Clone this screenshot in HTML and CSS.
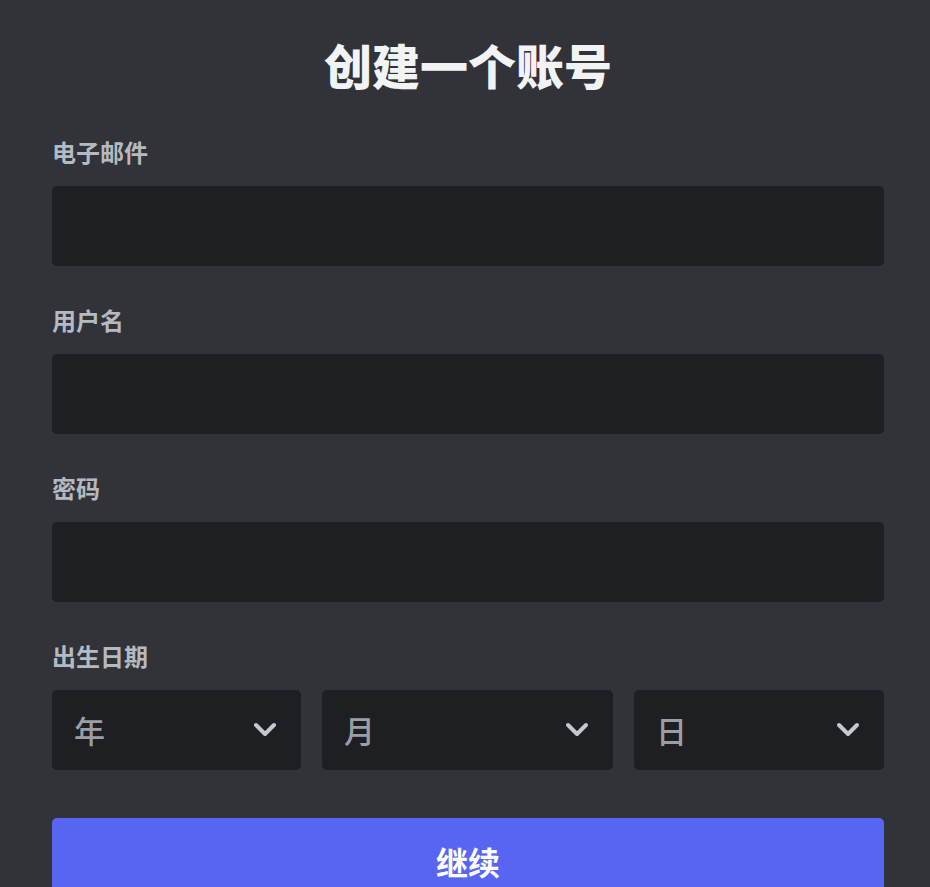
FILE: index.html
```html
<!DOCTYPE html>
<html lang="zh-CN">
<head>
<meta charset="utf-8">
<title>创建一个账号</title>
<link rel="stylesheet" href="styles.css">
</head>
<body>
<main class="form">
  <h1 class="title">创建一个账号</h1>
  <div class="field">
    <label class="label">电子邮件</label>
    <input class="input" type="email">
  </div>
  <div class="field">
    <label class="label">用户名</label>
    <input class="input" type="text">
  </div>
  <div class="field">
    <label class="label">密码</label>
    <input class="input" type="password">
  </div>
  <div class="field">
    <label class="label">出生日期</label>
    <div class="dob">
      <div class="select"><span class="select-text">年</span>
        <svg class="chev" viewBox="0 0 24 16" width="24" height="16"><path d="M3 3 L12 12 L21 3" fill="none" stroke="currentColor" stroke-width="4" stroke-linecap="round" stroke-linejoin="round"/></svg>
      </div>
      <div class="select"><span class="select-text">月</span>
        <svg class="chev" viewBox="0 0 24 16" width="24" height="16"><path d="M3 3 L12 12 L21 3" fill="none" stroke="currentColor" stroke-width="4" stroke-linecap="round" stroke-linejoin="round"/></svg>
      </div>
      <div class="select"><span class="select-text">日</span>
        <svg class="chev" viewBox="0 0 24 16" width="24" height="16"><path d="M3 3 L12 12 L21 3" fill="none" stroke="currentColor" stroke-width="4" stroke-linecap="round" stroke-linejoin="round"/></svg>
      </div>
    </div>
  </div>
  <button class="submit" type="button">继续</button>
</main>
</body>
</html>
```
FILE: styles.css
```css
html, body {
  margin: 0;
  padding: 0;
  height: 100%;
  overflow: hidden;
  background: #313338;
}
body {
  font-family: "Noto Sans CJK SC", "Noto Sans", sans-serif;
}
.form {
  padding: 35px 46px 0 52px;
  display: flex;
  flex-direction: column;
}
.title {
  margin: 0 0 44px;
  font-size: 48px;
  line-height: 58px;
  font-weight: 900;
  color: #f2f3f5;
  text-align: center;
}
.field {
  display: flex;
  flex-direction: column;
  margin-bottom: 39px;
}
.field:last-of-type {
  margin-bottom: 48px;
}
.label {
  font-size: 24px;
  line-height: 30px;
  font-weight: 700;
  color: #b5bac1;
  margin-bottom: 19px;
}
.input {
  box-sizing: border-box;
  height: 80px;
  margin: 0;
  border: none;
  outline: none;
  border-radius: 5px;
  background: #1e1f22;
  color: #dbdee1;
  font-size: 24px;
  padding: 0 20px;
}
.dob {
  display: grid;
  grid-template-columns: 249fr 291fr 250fr;
  column-gap: 21px;
}
.select {
  box-sizing: border-box;
  height: 80px;
  border-radius: 5px;
  background: #1e1f22;
  display: flex;
  align-items: center;
  justify-content: space-between;
  padding: 0 24px 0 22px;
}
.select-text {
  font-size: 31px;
  line-height: 40px;
  font-weight: 500;
  color: #9a9ea6;
}
.chev {
  color: #c4c9ce;
  display: block;
}
.submit {
  box-sizing: border-box;
  height: 86px;
  margin: 0;
  border: none;
  border-radius: 5px;
  background: #5865f2;
  color: #ffffff;
  font-family: "Noto Sans CJK SC", "Noto Sans", sans-serif;
  font-size: 32px;
  font-weight: 700;
  line-height: 40px;
}
```
